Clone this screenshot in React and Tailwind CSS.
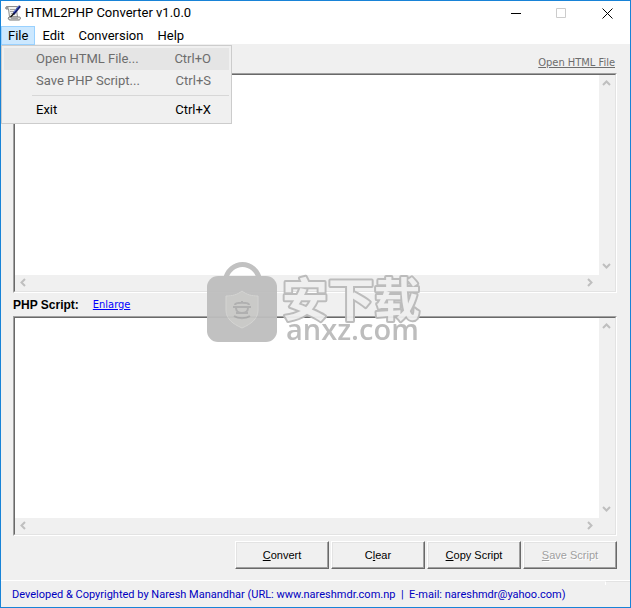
import { useState } from 'react';

const menus = ['File', 'Edit', 'Conversion', 'Help'];

const arrows = {
  up: 'M1 6 L4.5 2.5 L8 6',
  down: 'M1 3 L4.5 6.5 L8 3',
  left: 'M6 1 L2.5 4.5 L6 8',
  right: 'M3 1 L6.5 4.5 L3 8',
};

function Arrow({ dir }) {
  return (
    <svg viewBox="0 0 9 9" className="w-[9px] h-[9px]" fill="none" stroke="#bfbfbf" strokeWidth="2" aria-hidden="true">
      <path d={arrows[dir]} />
    </svg>
  );
}

function ScriptIcon() {
  return (
    <svg viewBox="0 0 16 16" className="w-4 h-4 shrink-0" aria-hidden="true">
      <path d="M2 1.500h10.500l-1 3 1 7.500h-8l-1-8H1C0 3.500.5 1.500 2 1.500z" fill="#f1f1ec" stroke="#8c8c8c" />
      <path d="M1 1.500h2.500v2.500H1z" fill="#999" />
      <path d="M4 12h10.500c1.500 0 1 3-.5 3H5c-1.500 0-2.500-1.500-1-3z" fill="#e4e4de" stroke="#777" />
      <path d="M5 4.500h5M5 6.500h4M6 8.500h2M6 13.500h7" stroke="#a5a5a5" fill="none" />
      <path d="M15 1 8.500 9" stroke="#141c6e" strokeWidth="2.500" />
      <path d="M14 1 8.500 7.500" stroke="#5a78d8" strokeWidth="1" />
      <path d="M9 8.500 5.500 12" stroke="#111" strokeWidth="1.500" />
    </svg>
  );
}

function TitleBar() {
  return (
    <header className="h-[25px] flex items-center justify-between pl-1">
      <div className="flex items-center gap-1 pb-[2px]">
        <ScriptIcon />
        <h1 className="text-[13px] leading-4 font-[Roboto,sans-serif]">HTML2PHP Converter v1.0.0</h1>
      </div>
      <div className="flex">
        <button aria-label="Minimize" className="w-[43px] h-6 flex items-center justify-center">
          <svg viewBox="0 0 11 11" className="w-[11px] h-[11px]" stroke="#000"><path d="M0 5.500h10" /></svg>
        </button>
        <button aria-label="Maximize" disabled className="w-[46px] h-6 flex items-center justify-center">
          <svg viewBox="0 0 11 11" className="w-[11px] h-[11px]" fill="none" stroke="#ccc"><path d="M.5.5h9v9h-9z" /></svg>
        </button>
        <button aria-label="Close" className="w-[46px] h-6 flex items-center justify-center">
          <svg viewBox="0 0 11 11" className="w-[11px] h-[11px]" stroke="#000"><path d="M.5.5l10 10M10.500.5l-10 10" /></svg>
        </button>
      </div>
    </header>
  );
}

function MenuItem({ label, shortcut, disabled, active }) {
  return (
    <button
      role="menuitem"
      disabled={disabled}
      className={`w-full h-[22px] flex items-center justify-between pl-8 pr-[18px] ${active ? 'bg-[#e5e5e5]' : ''} ${disabled ? 'text-[#6d6d6d]' : 'text-black'}`}
    >
      <span>{label}</span>
      <span>{shortcut}</span>
    </button>
  );
}

function FileMenu() {
  return (
    <div role="menu" className="absolute left-0 top-[19px] z-10 w-[231px] border border-[#ccc] bg-[#f0f0f0] p-[2px]">
      <MenuItem label="Open HTML File..." shortcut="Ctrl+O" disabled active />
      <MenuItem label="Save PHP Script..." shortcut="Ctrl+S" disabled />
      <hr className="ml-7 my-[3px] border-[#d7d7d7]" />
      <MenuItem label="Exit" shortcut="Ctrl+X" />
    </div>
  );
}

function MenuBar({ open, setOpen }) {
  return (
    <nav className="relative flex h-[18px] text-[13px] leading-4 font-[Roboto,sans-serif]">
      {menus.map((menu) => (
        <button
          key={menu}
          onClick={() => setOpen(open === menu ? '' : menu)}
          className={`h-[19px] border px-[6px] ${open === menu ? 'bg-[#cce8ff] border-[#99d1ff]' : 'border-transparent'}`}
        >
          {menu}
        </button>
      ))}
      {open === 'File' && <FileMenu />}
    </nav>
  );
}

function Editor({ label }) {
  return (
    <div className="flex-1 flex border border-t-[#a0a0a0] border-l-[#a0a0a0] border-r-white border-b-white">
      <div className="flex-1 flex border border-t-[#696969] border-l-[#696969] border-r-[#e3e3e3] border-b-[#e3e3e3]">
        <div className="flex-1 flex flex-col">
          <textarea aria-label={label} className="flex-1 w-full resize-none bg-white outline-none" />
          <div className="h-4 flex items-center justify-between pl-1 pr-[5px] pb-px">
            <Arrow dir="left" />
            <Arrow dir="right" />
          </div>
        </div>
        <div className="w-4 flex flex-col items-center justify-between pt-1 pb-[21px] pr-px">
          <Arrow dir="up" />
          <Arrow dir="down" />
        </div>
      </div>
    </div>
  );
}

function ActionButton({ before, mnemonic, after, disabled }) {
  return (
    <button
      disabled={disabled}
      className={`w-[94px] h-7 border border-t-white border-l-white border-r-[#696969] border-b-[#696969] shadow-[inset_-1px_-1px_0_#a0a0a0,inset_1px_1px_0_#e3e3e3] ${disabled ? 'text-[#a0a0a0] [text-shadow:1px_1px_0_#fff]' : 'text-black'}`}
    >
      {before}<span className="underline">{mnemonic}</span>{after}
    </button>
  );
}

function Watermark() {
  return (
    <svg viewBox="0 0 220 96" className="pointer-events-none absolute left-[205px] top-[259px] w-[220px] h-24 overflow-visible opacity-95" aria-hidden="true">
      <path d="M19 21C23-1 50-1 54 21" fill="none" stroke="#bebebe" strokeWidth="5" />
      <rect x="1" y="16" width="70" height="66" rx="11" fill="#bebebe" />
      <path d="M36 31c5 4 10 5 16 5v14c0 9-7 14-16 18-9-4-16-9-16-18V36c6 0 11-1 16-5z" fill="#c8c8c6" stroke="#d3d3d1" />
      <path d="M29 45c0-3 14-3 14 0M36 41v2M27 47h18M30 48c0 4 4 5 6 5s6-1 6-5M30 53h12M28 56c4 3 12 3 16 0" fill="none" stroke="#adadad" strokeWidth="2" />
      <text x="76" y="56" fontSize="46" fontWeight="700" fill="#efefef" stroke="#bababa" strokeWidth="4" strokeLinejoin="round" paintOrder="stroke" className="font-['Noto_Sans_CJK_SC',sans-serif]">安下载</text>
      <text x="80" y="80" fontSize="29" fontWeight="600" fill="#bababa" className="font-['Open_Sans',sans-serif]">anxz.com</text>
    </svg>
  );
}

export default function App() {
  const [open, setOpen] = useState('File');

  return (
    <div className="relative min-h-screen flex flex-col border border-[#1883d7] bg-white text-black font-['DejaVu_Sans_Condensed','DejaVu_Sans',sans-serif] text-[11px]">
      <TitleBar />
      <MenuBar open={open} setOpen={setOpen} />
      <main className="flex-1 flex flex-col bg-[#f0f0f0] pl-3 pr-[13px] pb-[11px]">
        <div className="h-[29px] flex items-end justify-end pb-[3px] pr-[2px]">
          <a href="#open" className="leading-[14px] text-[#6d6d6d] underline">Open HTML File</a>
        </div>
        <Editor label="HTML Code" />
        <div className="h-[23px] flex items-center gap-[14px]">
          <h2 className="font-bold font-['Liberation_Sans',sans-serif] text-[12px]">PHP Script:</h2>
          <a href="#enlarge" className="pt-[2px] text-[#0000ff] underline">Enlarge</a>
        </div>
        <Editor label="PHP Script" />
        <div className="flex justify-end gap-[2px] pt-[5px] font-['Liberation_Sans',sans-serif]">
          <ActionButton mnemonic="C" after="onvert" />
          <ActionButton before="C" mnemonic="l" after="ear" />
          <ActionButton mnemonic="C" after="opy Script" />
          <ActionButton mnemonic="S" after="ave Script" disabled />
        </div>
      </main>
      <footer className="h-[27px] border-t border-white bg-[#f0f0f0] flex justify-between pl-[11px] text-[#0000c0]">
        <p className="self-center pt-[2px] whitespace-pre font-[Roboto,sans-serif]">Developed &amp; Copyrighted by Naresh Manandhar (URL: www.nareshmdr.com.np  |  E-mail: nareshmdr@yahoo.com)</p>
        <div className="w-[25px] h-1 border-l border-l-white border-t border-t-[#e3e3e3]" />
      </footer>
      <Watermark />
    </div>
  );
}
